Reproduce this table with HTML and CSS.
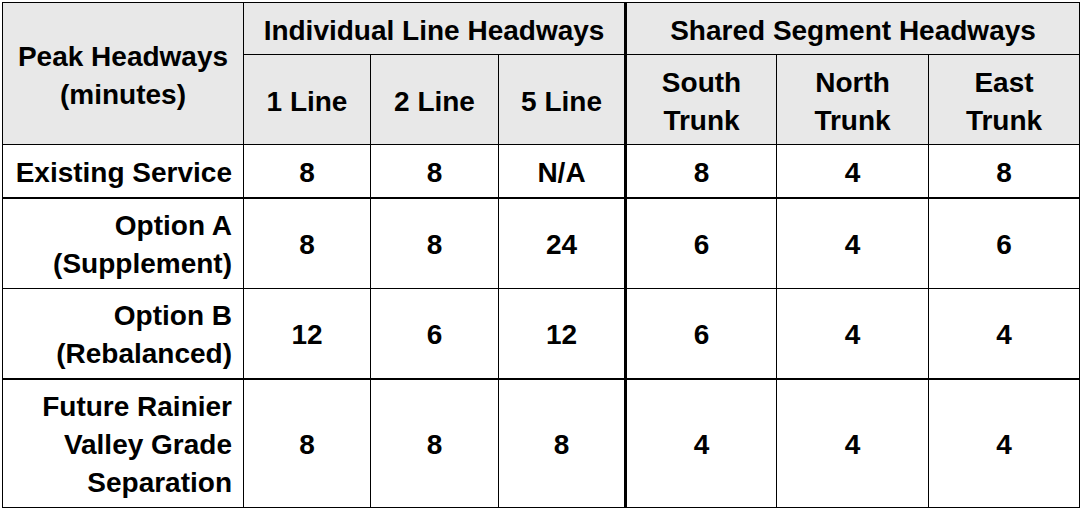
FILE: index.html
```html
<!DOCTYPE html>
<html>
<head>
<meta charset="utf-8">
<link rel="stylesheet" href="styles.css">
</head>
<body>
<table class="hw">
  <colgroup>
    <col class="c-label">
    <col class="c-line">
    <col class="c-line2">
    <col class="c-line">
    <col class="c-seg">
    <col class="c-seg2">
    <col class="c-seg">
  </colgroup>
  <thead>
    <tr class="r-group">
      <th rowspan="2" class="corner">Peak Headways<br>(minutes)</th>
      <th colspan="3" class="split">Individual Line Headways</th>
      <th colspan="3">Shared Segment Headways</th>
    </tr>
    <tr class="r-sub">
      <th>1 Line</th>
      <th>2 Line</th>
      <th class="split">5 Line</th>
      <th>South<br>Trunk</th>
      <th>North<br>Trunk</th>
      <th>East<br>Trunk</th>
    </tr>
  </thead>
  <tbody>
    <tr class="r-exist thick">
      <th class="label">Existing Service</th>
      <td>8</td><td>8</td><td class="split">N/A</td><td>8</td><td>4</td><td>8</td>
    </tr>
    <tr class="r-a">
      <th class="label">Option A<br>(Supplement)</th>
      <td>8</td><td>8</td><td class="split">24</td><td>6</td><td>4</td><td>6</td>
    </tr>
    <tr class="r-b thick">
      <th class="label">Option B<br>(Rebalanced)</th>
      <td>12</td><td>6</td><td class="split">12</td><td>6</td><td>4</td><td>4</td>
    </tr>
    <tr class="r-future">
      <th class="label">Future Rainier<br>Valley Grade<br>Separation</th>
      <td>8</td><td>8</td><td class="split">8</td><td>4</td><td>4</td><td>4</td>
    </tr>
  </tbody>
</table>
</body>
</html>
```
FILE: styles.css
```css
html, body {
  margin: 0;
  padding: 0;
  background: #ffffff;
}
body {
  padding: 2px 0 0 2px;
}
.hw {
  border-collapse: collapse;
  table-layout: fixed;
  width: 1078px;
  font-family: "Liberation Sans", Arial, sans-serif;
  font-weight: bold;
  font-size: 28px;
  line-height: 38px;
  color: #000;
  border: 1px solid #000;
}
.c-label { width: 241px; }
.c-line { width: 127px; }
.c-line2 { width: 128px; }
.c-seg { width: 151px; }
.c-seg2 { width: 152px; }
.hw th, .hw td {
  border: 1px solid #000;
  padding: 4px 0 0 0;
  text-align: center;
  vertical-align: middle;
  font-weight: bold;
}
.hw thead th {
  background: #e8e8e8;
}
.hw .split {
  border-right: 3px solid #000;
}
.hw th.label {
  text-align: right;
  padding-right: 11px;
  background: #fff;
}
.hw tr.thick > th, .hw tr.thick > td {
  border-bottom: 2px solid #000;
}
.r-group { height: 52px; }
.r-sub { height: 90px; }
.r-exist { height: 53px; }
.r-a { height: 91px; }
.r-b { height: 90px; }
.r-future { height: 129px; }
```
